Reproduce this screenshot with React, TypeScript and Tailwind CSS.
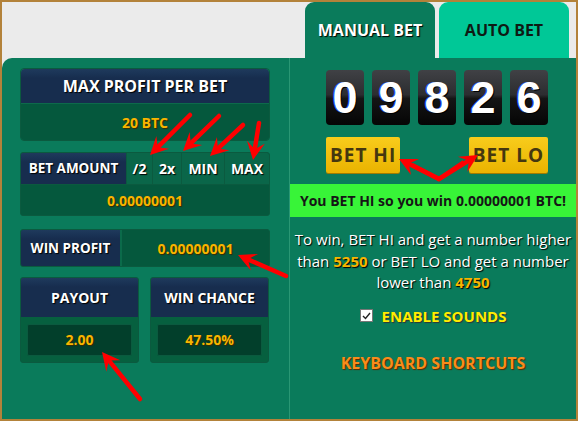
import type { ReactNode } from "react";

const FONT = { fontFamily: '"Open Sans", "Liberation Sans", sans-serif' };
const SHADOW_W = "[text-shadow:1px_1px_1px_#000]";

type Pt = [number, number];

// one red annotation arrow, tail -> tip, with a barbed head
function arrowParts(tail: Pt, tip: Pt, key: string) {
  const dx = tip[0] - tail[0];
  const dy = tip[1] - tail[1];
  const len = Math.hypot(dx, dy);
  const ux = dx / len;
  const uy = dy / len;
  const px = -uy;
  const py = ux;
  const head = 18;
  const hw = 9;
  const bx = tip[0] - ux * head;
  const by = tip[1] - uy * head;
  const nx = tip[0] - ux * head * 0.6;
  const ny = tip[1] - uy * head * 0.6;
  const pts = [
    [tip[0], tip[1]],
    [bx + px * hw, by + py * hw],
    [nx, ny],
    [bx - px * hw, by - py * hw],
  ]
    .map((p) => p.join(","))
    .join(" ");
  return (
    <g key={key}>
      <line x1={tail[0]} y1={tail[1]} x2={nx} y2={ny} stroke="#ff0000" strokeWidth={4.5} strokeLinecap="round" />
      <polygon points={pts} fill="#ff0000" />
    </g>
  );
}

function Arrows() {
  return (
    <svg className="pointer-events-none absolute left-0 top-0" width={578} height={421}>
      {arrowParts([188, 113], [148, 153], "a1")}
      {arrowParts([217, 114], [181, 149], "a2")}
      {arrowParts([241, 123], [208, 154], "a3")}
      {arrowParts([257, 121], [251, 158], "a4")}
      {arrowParts([284, 274], [236, 253], "a5")}
      {arrowParts([138, 397], [100, 350], "a6")}
      <polyline points="410,163 437,177 462,160" fill="none" stroke="#ff0000" strokeWidth={4.5} strokeLinejoin="round" />
      {arrowParts([437, 177], [397, 157], "a7")}
      {arrowParts([437, 177], [476, 153], "a8")}
    </svg>
  );
}

function NavyHead({ children, className = "" }: { children: ReactNode; className?: string }) {
  return (
    <div
      className={`flex items-center justify-center bg-[linear-gradient(#1f3a5c_0,#1a3355_5px,#172d4e_9px,#172d4e)] font-bold text-white ${SHADOW_W} ${className}`}
    >
      {children}
    </div>
  );
}

function Gold({ children }: { children: ReactNode }) {
  return <span className="text-[14px] font-bold text-[#f7b500] [text-shadow:1px_1px_1px_#3a2a00]">{children}</span>;
}

function Digit({ d }: { d: string }) {
  return (
    <div className="relative flex h-[55px] w-[38px] items-center justify-center overflow-hidden rounded-[4px] bg-[linear-gradient(#404145_0%,#2c2d30_45%,#151515_52%,#050505_100%)]">
      <span
        className="text-[45px] font-bold leading-none text-white [text-shadow:1px_1px_0_#000,-1px_0_0_#2255ff]"
        style={{ fontFamily: '"Liberation Sans", Arial, sans-serif' }}
      >
        {d}
      </span>
    </div>
  );
}

function BetButton({ label }: { label: string }) {
  return (
    <div className="flex h-[36px] items-center justify-center rounded-[2px] bg-[linear-gradient(#f8cc1c,#eab300)] px-[4px] text-[19px] font-bold tracking-[1px] text-[#45370f] shadow-[0_1px_0_#a07a00]">
      {label}
    </div>
  );
}

export default function App() {
  return (
    <div
      className="relative flex h-[421px] w-[578px] flex-col border-2 border-[#b3823a] bg-[#ebebeb]"
      style={FONT}
    >
      {/* tabs */}
      <div className="flex h-[56px] shrink-0 items-stretch justify-end gap-[4px] pr-[7px]">
        <div className={`flex w-[130px] items-center justify-center rounded-t-[9px] bg-[#0a7b5b] text-[16px] font-bold text-white ${SHADOW_W}`}>
          MANUAL BET
        </div>
        <div className="flex w-[130px] items-center justify-center rounded-t-[9px] bg-[#00c897] text-[16px] font-bold text-[#0e1a14]">
          AUTO BET
        </div>
      </div>

      {/* panel */}
      <div className="flex flex-1 rounded-tl-[10px] bg-[#0a7b5b]">
        {/* left column */}
        <div className="flex w-[287px] shrink-0 flex-col pl-[18px] pt-[10px]">
          <div className="w-[250px] overflow-hidden rounded-[4px] border border-[#0b5a3f]">
            <NavyHead className="h-[34px] rounded-t-[4px] text-[16px]">MAX PROFIT PER BET</NavyHead>
            <div className="flex h-[37px] items-center justify-center border-t border-[#0d6a4b] bg-[#05583d]">
              <Gold>20 BTC</Gold>
            </div>
          </div>

          <div className="mt-[11px] w-[250px] overflow-hidden rounded-[3px] border border-[#0b5a3f] bg-[#05583d]">
            <div className="flex h-[31px] text-[14px] font-bold text-white">
              <NavyHead className="w-[105px] text-[13.5px]">BET AMOUNT</NavyHead>
              <div className={`flex w-[26px] items-center justify-center border-l border-[#0b5a3f] bg-[#0a6649] ${SHADOW_W}`}>/2</div>
              <div className={`flex w-[29px] items-center justify-center border-l border-[#0b5a3f] bg-[#0a6649] ${SHADOW_W}`}>2x</div>
              <div className={`flex w-[43px] items-center justify-center border-l border-[#0b5a3f] bg-[#0a6649] ${SHADOW_W}`}>MIN</div>
              <div className={`flex flex-1 items-center justify-center border-l border-[#0b5a3f] bg-[#0a6649] ${SHADOW_W}`}>MAX</div>
            </div>
            <div className="flex h-[31px] items-center justify-center border-t border-[#0b5a3f]">
              <Gold>0.00000001</Gold>
            </div>
          </div>

          <div className="mt-[13px] flex h-[38px] w-[250px] overflow-hidden rounded-[3px] border border-[#0b5a3f] bg-[#05583d]">
            <NavyHead className="w-[99px] text-[13.5px]">WIN PROFIT</NavyHead>
            <div className="flex flex-1 items-center justify-center border-l-2 border-[#0b6a4a]">
              <Gold>0.00000001</Gold>
            </div>
          </div>

          <div className="mt-[10px] flex w-[250px] gap-[11px]">
            {[
              ["PAYOUT", "2.00"],
              ["WIN CHANCE", "47.50%"],
            ].map(([label, value]) => (
              <div key={label} className="flex h-[86px] w-[119px] flex-col overflow-hidden rounded-[3px] border border-[#0b5a3f] bg-[#06603f]">
                <NavyHead className="h-[39px] shrink-0 text-[14px]">{label}</NavyHead>
                <div className="flex flex-1 items-center justify-center px-[6px]">
                  <div className="flex h-[32px] w-full items-center justify-center rounded-[2px] border border-[#0b5a3f] bg-[#023f2b]">
                    <Gold>{value}</Gold>
                  </div>
                </div>
              </div>
            ))}
          </div>
        </div>

        {/* divider */}
        <div className="w-px bg-[#2a9774]" />

        {/* right column */}
        <div className="flex flex-1 flex-col items-center pt-[12px]">
          <div className="flex w-[222px] translate-x-[4px] flex-col">
            <div className="flex justify-between">
              {"09826".split("").map((d, i) => (
                <Digit key={i} d={d} />
              ))}
            </div>
            <div className="mt-[12px] flex justify-between">
              <BetButton label="BET HI" />
              <BetButton label="BET LO" />
            </div>
          </div>

          <div className="mt-[11px] flex h-[33px] w-full items-center justify-center bg-[#38f438] text-[14px] font-bold text-[#161616]">
            You BET HI so you win 0.00000001 BTC!
          </div>

          <p className={`mt-[12px] px-[4px] text-center text-[15px] leading-[21.5px] text-white ${SHADOW_W}`}>
            To win, BET HI and get a number higher than{" "}
            <span className="font-bold text-[#f7b500]">5250</span> or BET LO and get a number lower than{" "}
            <span className="font-bold text-[#f7b500]">4750</span>
          </p>

          <div className="mt-[11px] flex items-center gap-[9px]">
            <div className="flex h-[13px] w-[13px] items-center justify-center border border-[#777] bg-white">
              <svg width="9" height="8" viewBox="0 0 9 8">
                <path d="M1 4 L3.5 6.5 L8 1" fill="none" stroke="#222" strokeWidth="1.4" />
              </svg>
            </div>
            <span className="text-[15px] font-bold text-[#ffec00] [text-shadow:1px_1px_1px_#333]">ENABLE SOUNDS</span>
          </div>

          <div className="mt-[24px] text-[16px] font-bold text-[#f98c1b] [text-shadow:1px_1px_1px_#5a2a00]">
            KEYBOARD SHORTCUTS
          </div>
        </div>
      </div>

      <Arrows />
    </div>
  );
}
